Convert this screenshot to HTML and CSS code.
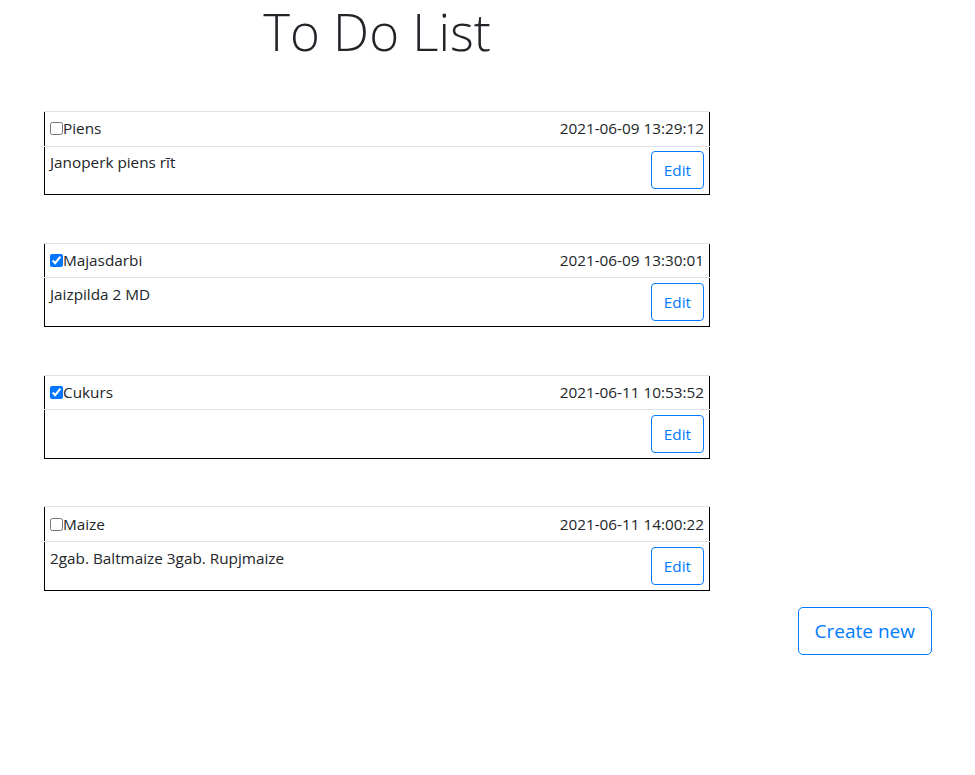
FILE: index.html
```html
<!DOCTYPE html>
<html lang="lv">
<head>
<meta charset="utf-8">
<title>To Do List</title>
<link rel="stylesheet" href="styles.css">
</head>
<body>
<div class="page">
  <div class="column">
    <h1 class="title">To Do List</h1>

    <table class="todo">
      <tr class="head-row">
        <td class="name"><input type="checkbox">Piens</td>
        <td class="date">2021-06-09 13:29:12</td>
      </tr>
      <tr class="body-row">
        <td class="desc">Janoperk piens rīt</td>
        <td class="actions"><button class="btn-edit">Edit</button></td>
      </tr>
    </table>

    <table class="todo">
      <tr class="head-row">
        <td class="name"><input type="checkbox" checked>Majasdarbi</td>
        <td class="date">2021-06-09 13:30:01</td>
      </tr>
      <tr class="body-row">
        <td class="desc">Jaizpilda 2 MD</td>
        <td class="actions"><button class="btn-edit">Edit</button></td>
      </tr>
    </table>

    <table class="todo">
      <tr class="head-row">
        <td class="name"><input type="checkbox" checked>Cukurs</td>
        <td class="date">2021-06-11 10:53:52</td>
      </tr>
      <tr class="body-row">
        <td class="desc"></td>
        <td class="actions"><button class="btn-edit">Edit</button></td>
      </tr>
    </table>

    <table class="todo last">
      <tr class="head-row">
        <td class="name"><input type="checkbox">Maize</td>
        <td class="date">2021-06-11 14:00:22</td>
      </tr>
      <tr class="body-row">
        <td class="desc">2gab. Baltmaize 3gab. Rupjmaize</td>
        <td class="actions"><button class="btn-edit">Edit</button></td>
      </tr>
    </table>
  </div>
  <div class="footer">
    <button class="btn-create">Create new</button>
  </div>
</div>
</body>
</html>
```

FILE: styles.css
```css
html, body {
  margin: 0;
  padding: 0;
  background: #fff;
}

body {
  font-family: "Open Sans", "Noto Sans", sans-serif;
  font-size: 15.3px;
  line-height: 1.5;
  color: #212529;
}

.page {
  padding: 0 43px 0 44px;
}

.column {
  width: 666px;
}

.title {
  margin: 0 0 50px 0;
  padding-top: 1px;
  font-size: 51px;
  font-weight: 300;
  line-height: 60px;
  text-align: center;
  color: #212529;
}

.todo {
  width: 100%;
  border-collapse: collapse;
  border: 1px solid #000;
  border-top: none;
  margin-bottom: 47.6px;
}

.todo.last {
  margin-bottom: 16px;
}

.todo td {
  padding: 4.8px 5px 4.8px 5px;
  border-top: 1px solid #dee2e6;
  vertical-align: top;
}

.head-row td {
  height: 24px;
  vertical-align: middle;
}

.name input {
  width: 13px;
  height: 13px;
  margin: 0;
  vertical-align: -1px;
}

.date {
  text-align: right;
  white-space: nowrap;
}

.actions {
  text-align: right;
}

.btn-edit,
.btn-create {
  font-family: inherit;
  color: #007bff;
  background: transparent;
  border: 1px solid #007bff;
  cursor: pointer;
}

.btn-edit {
  font-size: 15.3px;
  line-height: 24px;
  padding: 6px 12px;
  border-radius: 4px;
}

.footer {
  display: flex;
  justify-content: flex-end;
}

.btn-create {
  font-size: 19px;
  line-height: 30px;
  padding: 8px 16px;
  border-radius: 5px;
}
```
